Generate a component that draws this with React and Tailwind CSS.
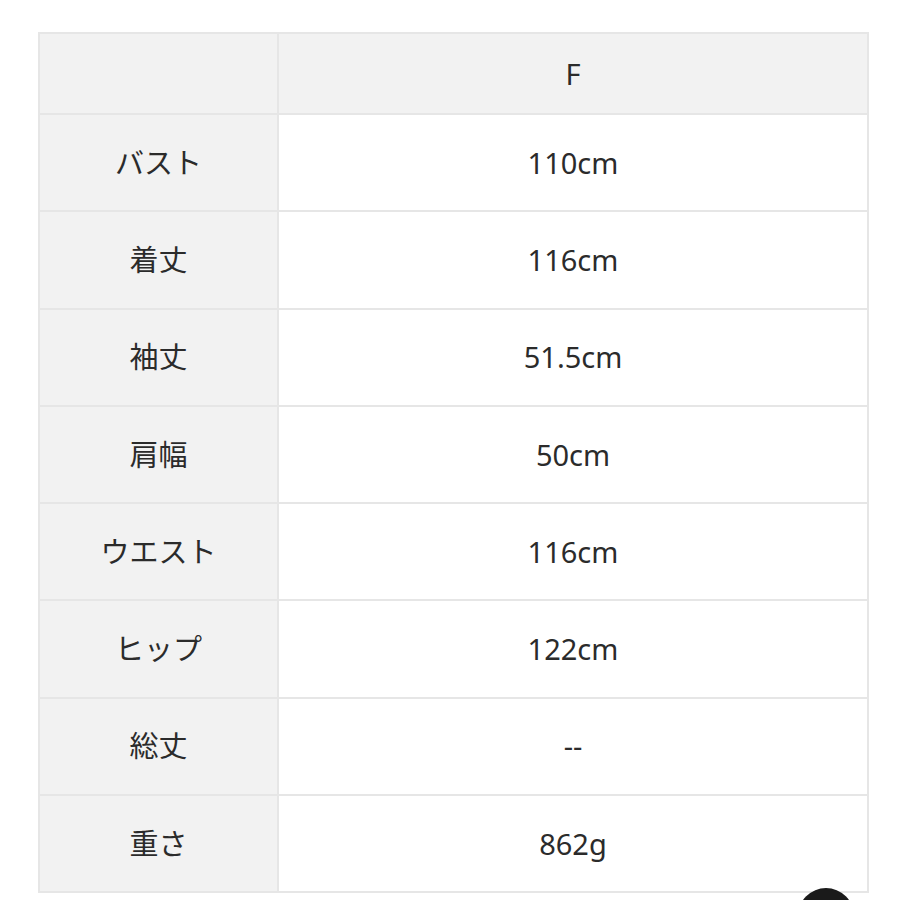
const rows = [
  ["バスト", "110cm"],
  ["着丈", "116cm"],
  ["袖丈", "51.5cm"],
  ["肩幅", "50cm"],
  ["ウエスト", "116cm"],
  ["ヒップ", "122cm"],
  ["総丈", "--"],
  ["重さ", "862g"],
];

export default function App() {
  return (
    <div
      className="relative w-[900px] h-[900px] overflow-hidden bg-white pt-[32px] pl-[38px] text-[#2b2b2b]"
      style={{ fontFamily: '"Noto Sans", "Noto Sans CJK JP", sans-serif' }}
    >
      <div className="w-[831px] border-2 border-[#e6e6e6]">
        <div className="grid grid-cols-[239px_1fr] h-[79px] bg-[#f2f2f2]">
          <div className="border-r-2 border-[#e6e6e6]" />
          <div className="flex items-center justify-center text-[29px]">F</div>
        </div>
        {rows.map(([label, value]) => (
          <div
            key={label}
            className="grid grid-cols-[239px_1fr] h-[97.25px] border-t-2 border-[#e6e6e6]"
          >
            <div className="flex items-center justify-center bg-[#f2f2f2] border-r-2 border-[#e6e6e6] text-[29px]">
              {label}
            </div>
            <div className="flex items-center justify-center text-[29px]">{value}</div>
          </div>
        ))}
      </div>
      <div className="absolute left-[798px] top-[888px] w-[56px] h-[56px] rounded-full bg-[#1a1a1a]" />
    </div>
  );
}
